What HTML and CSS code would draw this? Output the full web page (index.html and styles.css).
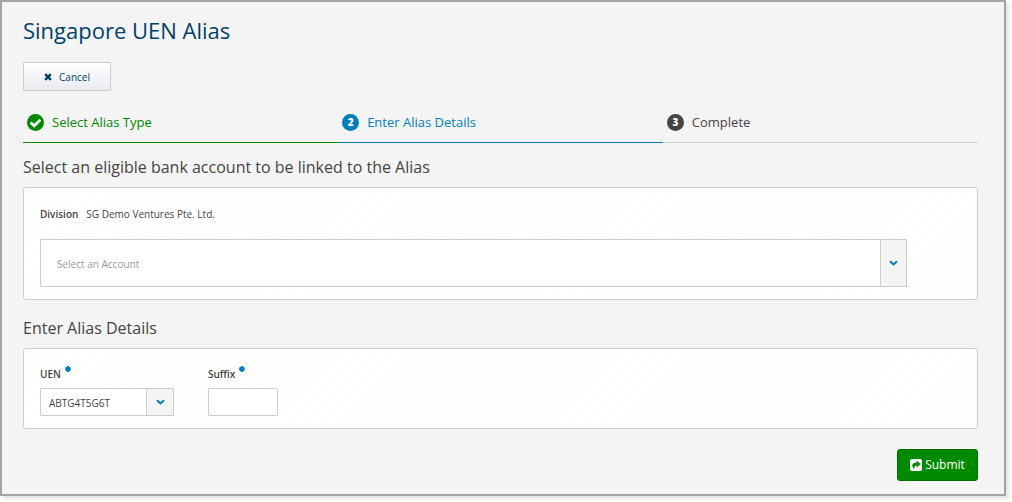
FILE: index.html
```html
<!DOCTYPE html>
<html lang="en">
<head>
<meta charset="utf-8">
<title>Singapore UEN Alias</title>
<link rel="stylesheet" href="styles.css">
</head>
<body>
<main class="frame">
  <h1 class="title">Singapore UEN Alias</h1>
  <button type="button" class="btn-cancel">
    <svg class="icon-x" viewBox="0 0 9 9" aria-hidden="true"><path d="M1.3 1.3 7.7 7.7M7.7 1.3 1.3 7.7"/></svg>
    Cancel
  </button>
  <ol class="steps">
    <li class="step done">
      <svg class="badge-check" viewBox="0 0 17 17" aria-hidden="true"><circle cx="8.5" cy="8.5" r="8.5"/><path d="M3.6 8.4 7.2 11.8 13.4 5.8"/></svg>
      Select Alias Type
    </li>
    <li class="step current"><span class="badge">2</span>Enter Alias Details</li>
    <li class="step"><span class="badge">3</span>Complete</li>
  </ol>
  <form class="form">
    <h2 class="section-title">Select an eligible bank account to be linked to the Alias</h2>
    <section class="panel">
      <dl class="division">
        <dt>Division</dt>
        <dd>SG Demo Ventures Pte. Ltd.</dd>
      </dl>
      <div class="picker picker-account">
        <select class="control" aria-label="Account"><option>Select an Account</option></select>
        <span class="arrow"><svg viewBox="0 0 9 6" aria-hidden="true"><path d="M1 1.2 4.5 4.4 8 1.2"/></svg></span>
      </div>
    </section>
    <h2 class="section-title">Enter Alias Details</h2>
    <section class="panel panel-fields">
      <div class="field">
        <label for="uen">UEN <svg class="required" viewBox="0 0 6 6" aria-hidden="true"><path d="M3 0V6M.4 1.5 5.6 4.5M5.6 1.5.4 4.5"/></svg></label>
        <div class="picker picker-uen">
          <select class="control" id="uen"><option>ABTG4T5G6T</option></select>
          <span class="arrow"><svg viewBox="0 0 9 6" aria-hidden="true"><path d="M1 1.2 4.5 4.4 8 1.2"/></svg></span>
        </div>
      </div>
      <div class="field">
        <label for="suffix">Suffix <svg class="required" viewBox="0 0 6 6" aria-hidden="true"><path d="M3 0V6M.4 1.5 5.6 4.5M5.6 1.5.4 4.5"/></svg></label>
        <input class="control suffix" id="suffix" type="text">
      </div>
    </section>
    <div class="actions">
      <button type="submit" class="btn-submit">
        <svg class="icon-share" viewBox="0 0 12 12" aria-hidden="true"><rect width="12" height="12" rx="2"/><path d="M6.6 1.4 10.8 4.9 6.6 8.4V6.4C4.8 6.4 4 7.2 4.4 10.2 1 7.2 1.8 3.6 6.6 3.5Z"/></svg>
        Submit
      </button>
    </div>
  </form>
</main>
</body>
</html>
```

FILE: styles.css
```css
* { box-sizing: border-box; }

body {
  margin: 0;
  padding: 0 6px 6px 0;
  background: #fff;
  color: #444;
  font: 10px/16px "Open Sans", "Noto Sans", sans-serif;
}

button, input, select { font: inherit; color: inherit; }

.frame {
  padding: 12px 26px 13px 21px;
  border: 2px solid #a3a3a3;
  background: #f4f4f4;
  box-shadow: 3px 3px 4px #e4e4e4;
}

.title {
  margin: 0 0 16px;
  color: #00416b;
  font-size: 22px;
  line-height: 32px;
  font-weight: 400;
}

.btn-cancel {
  display: flex;
  align-items: center;
  justify-content: center;
  gap: 7px;
  width: 88px;
  height: 29px;
  padding: 0;
  border: 1px solid #ccc;
  border-radius: 1px;
  background: linear-gradient(#fff, #e9ebf2);
  color: #00416b;
}

.icon-x { width: 8px; height: 8px; fill: none; stroke: #00416b; stroke-width: 2.8; }

.steps {
  display: grid;
  grid-template-columns: 33% 34% 33%;
  margin: 11px 0 0;
  padding: 0;
  list-style: none;
}

.step {
  display: flex;
  align-items: center;
  gap: 8px;
  height: 41px;
  padding-left: 4px;
  border-bottom: 1px solid #ccc;
  font-size: 13px;
}

.done { color: #008a00; border-color: #008a00; }
.current { color: #007dba; border-color: #007dba; }

.badge, .badge-check { width: 17px; height: 17px; }

.badge {
  border-radius: 50%;
  background: #444;
  color: #fff;
  font-size: 10px;
  line-height: 17px;
  font-weight: 800;
  text-align: center;
}

.current .badge { background: #007dba; }

.badge-check circle { fill: #008a00; }
.badge-check path { fill: none; stroke: #fff; stroke-width: 2.8; }

.section-title {
  margin: 0;
  padding: 12px 0 8px;
  font-size: 16px;
  line-height: 24px;
  font-weight: 400;
}

.panel + .section-title { padding-top: 16px; }

.panel {
  padding: 17px 16px 12px;
  border: 1px solid #ccc;
  border-radius: 3px;
  background: repeating-linear-gradient(135deg, #fff 0 4px, #fdfdfd 4px 6px);
}

.division { display: flex; gap: 8px; margin: 0 0 16px; line-height: 18px; }
.division dt { font-weight: 600; }
.division dd { margin: 0; }

.picker { position: relative; }
.picker-account { width: 94.1%; height: 48px; }
.picker-uen { width: 134px; height: 28px; }

.control {
  display: block;
  width: 100%;
  height: 100%;
  margin: 0;
  padding: 1px 36px 0 8px;
  border: 1px solid #ccc;
  border-radius: 1px;
  background: #fff;
  appearance: none;
}

.picker-account .control { padding-left: 16px; color: #999; }

.arrow {
  position: absolute;
  top: 0;
  right: 0;
  bottom: 0;
  display: flex;
  align-items: center;
  justify-content: center;
  width: 28px;
  border: 1px solid #ccc;
  background: #f4f4f4;
  pointer-events: none;
}

.picker-account .arrow { width: 27px; }

.arrow svg { width: 9px; height: 6px; fill: none; stroke: #007dba; stroke-width: 2; }

.panel-fields { display: flex; gap: 34px; }

.field label {
  display: flex;
  gap: 4px;
  margin-bottom: 6px;
  font-weight: 600;
}

.required { width: 6px; height: 6px; stroke: #007dba; stroke-width: 2; }

.suffix { width: 70px; height: 28px; padding: 0 8px; }

.actions { display: flex; justify-content: flex-end; margin-top: 20px; }

.btn-submit {
  display: flex;
  align-items: center;
  justify-content: center;
  gap: 3px;
  width: 81px;
  height: 32px;
  padding: 0;
  border: 1px solid #006e00;
  border-radius: 3px;
  background: #008a00;
  color: #fff;
  font-size: 12px;
}

.icon-share { width: 12px; height: 12px; }
.icon-share rect { fill: #fff; }
.icon-share path { fill: #008a00; }
```
